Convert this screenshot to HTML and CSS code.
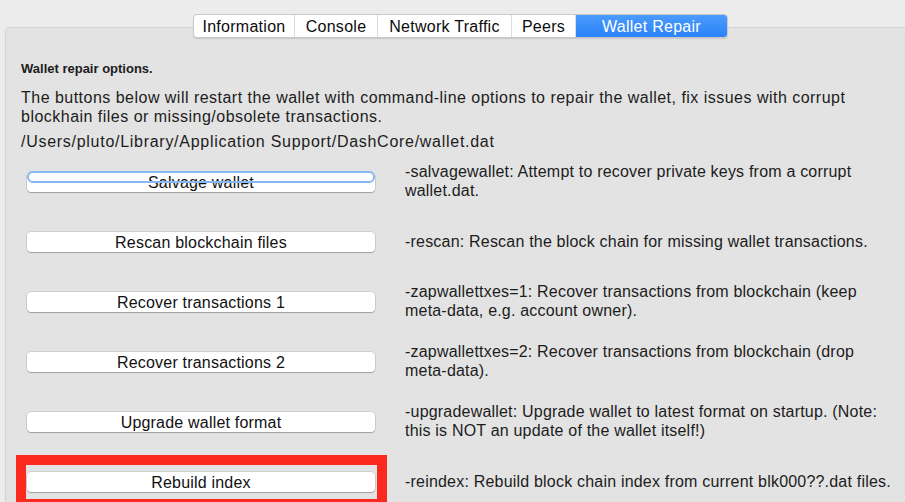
FILE: index.html
```html
<!DOCTYPE html>
<html>
<head>
<meta charset="utf-8">
<link rel="stylesheet" href="styles.css">
</head>
<body>
<div class="window">
  <div class="tabs">
    <div class="tab t-info">Information</div>
    <div class="tab t-console">Console</div>
    <div class="tab t-net">Network Traffic</div>
    <div class="tab t-peers">Peers</div>
    <div class="tab t-repair active">Wallet Repair</div>
  </div>
  <div class="panel">
    <div class="heading">Wallet repair options.</div>
    <p class="intro">The buttons below will restart the wallet with command-line options to repair the wallet, fix issues with corrupt blockhain files or missing/obsolete transactions.</p>
    <p class="path">/Users/pluto/Library/Application Support/DashCore/wallet.dat</p>
    <div class="rows">
      <div class="row">
        <div class="btn focused">Salvage wallet</div>
        <div class="desc">-salvagewallet: Attempt to recover private keys from a corrupt wallet.dat.</div>
      </div>
      <div class="row">
        <div class="btn">Rescan blockchain files</div>
        <div class="desc">-rescan: Rescan the block chain for missing wallet transactions.</div>
      </div>
      <div class="row">
        <div class="btn">Recover transactions 1</div>
        <div class="desc">-zapwallettxes=1: Recover transactions from blockchain (keep meta-data, e.g. account owner).</div>
      </div>
      <div class="row">
        <div class="btn">Recover transactions 2</div>
        <div class="desc">-zapwallettxes=2: Recover transactions from blockchain (drop meta-data).</div>
      </div>
      <div class="row">
        <div class="btn">Upgrade wallet format</div>
        <div class="desc">-upgradewallet: Upgrade wallet to latest format on startup. (Note: this is NOT an update of the wallet itself!)</div>
      </div>
      <div class="row">
        <div class="btn highlighted">Rebuild index</div>
        <div class="desc">-reindex: Rebuild block chain index from current blk000??.dat files.</div>
      </div>
    </div>
  </div>
</div>
</body>
</html>
```
FILE: styles.css
```css
html, body {
  margin: 0;
  padding: 0;
  background: #ececec;
  overflow: hidden;
  height: 502px;
}
body {
  font-family: "Liberation Sans", Arial, sans-serif;
  color: #1c1c1c;
}
.window {
  padding-top: 14px;
}
.tabs {
  position: relative;
  z-index: 2;
  display: flex;
  margin-left: 193px;
  width: 535px;
  height: 24px;
  box-sizing: border-box;
  background: #fff;
  border: 1px solid #c9c9c9;
  border-radius: 4px;
  box-shadow: 0 1px 1px rgba(0,0,0,0.12);
  margin-bottom: -11px;
  overflow: hidden;
}
.tab {
  display: flex;
  align-items: center;
  justify-content: center;
  padding-top: 2px;
  font-size: 16px;
  letter-spacing: 0.27px;
  color: #0c0c0c;
  border-right: 1px solid #dcdcdc;
  box-sizing: border-box;
}
.t-info { width: 101px; }
.t-console { width: 83px; }
.t-net { width: 134px; }
.t-peers { width: 64px; }
.t-repair { flex: 1; border-right: none; }
.tab.active {
  background: linear-gradient(#4a9bfd, #2a82f6);
  color: #fff;
}
.panel {
  margin-left: 5px;
  background: #e3e3e3;
  border: 1px solid #d4d4d4;
  border-right: none;
  border-radius: 5px 0 0 0;
  padding: 33px 0 0 15px;
  height: 520px;
  box-sizing: border-box;
}
.heading {
  font-weight: bold;
  font-size: 13px;
  line-height: 15px;
}
.intro {
  margin: 12px 0 0;
  font-size: 16px;
  letter-spacing: 0.48px;
  line-height: 19px;
  width: 840px;
}
.path {
  margin: 6px 0 0;
  font-size: 16px;
  letter-spacing: 0.72px;
  line-height: 19px;
}
.rows {
  display: flex;
  flex-direction: column;
}
.row {
  display: grid;
  grid-template-columns: 348px 1fr;
  column-gap: 30px;
  align-items: center;
  height: 60px;
  padding-left: 6px;
}
.btn {
  position: relative;
  height: 20px;
  box-sizing: border-box;
  padding-top: 2px;
  margin-top: 2px;
  background: #fff;
  border-radius: 4px;
  box-shadow: 0 0 0 0.5px rgba(0,0,0,0.18), 0 1px 1px rgba(0,0,0,0.22);
  font-size: 16px;
  letter-spacing: 0.2px;
  line-height: 18px;
  text-align: center;
  color: #111;
}
.btn.focused::before {
  content: "";
  position: absolute;
  left: 0;
  top: -1px;
  right: 0;
  height: 12px;
  border: 2px solid #86b8f3;
  border-radius: 6px;
  box-sizing: border-box;
}
.btn.highlighted::after {
  content: "";
  position: absolute;
  left: -11px;
  top: -17px;
  width: 371px;
  height: 54px;
  border: 10px solid #fc2a1e;
  box-sizing: border-box;
}
.desc {
  font-size: 16px;
  letter-spacing: 0.2px;
  line-height: 19px;
  width: 490px;
}
```
